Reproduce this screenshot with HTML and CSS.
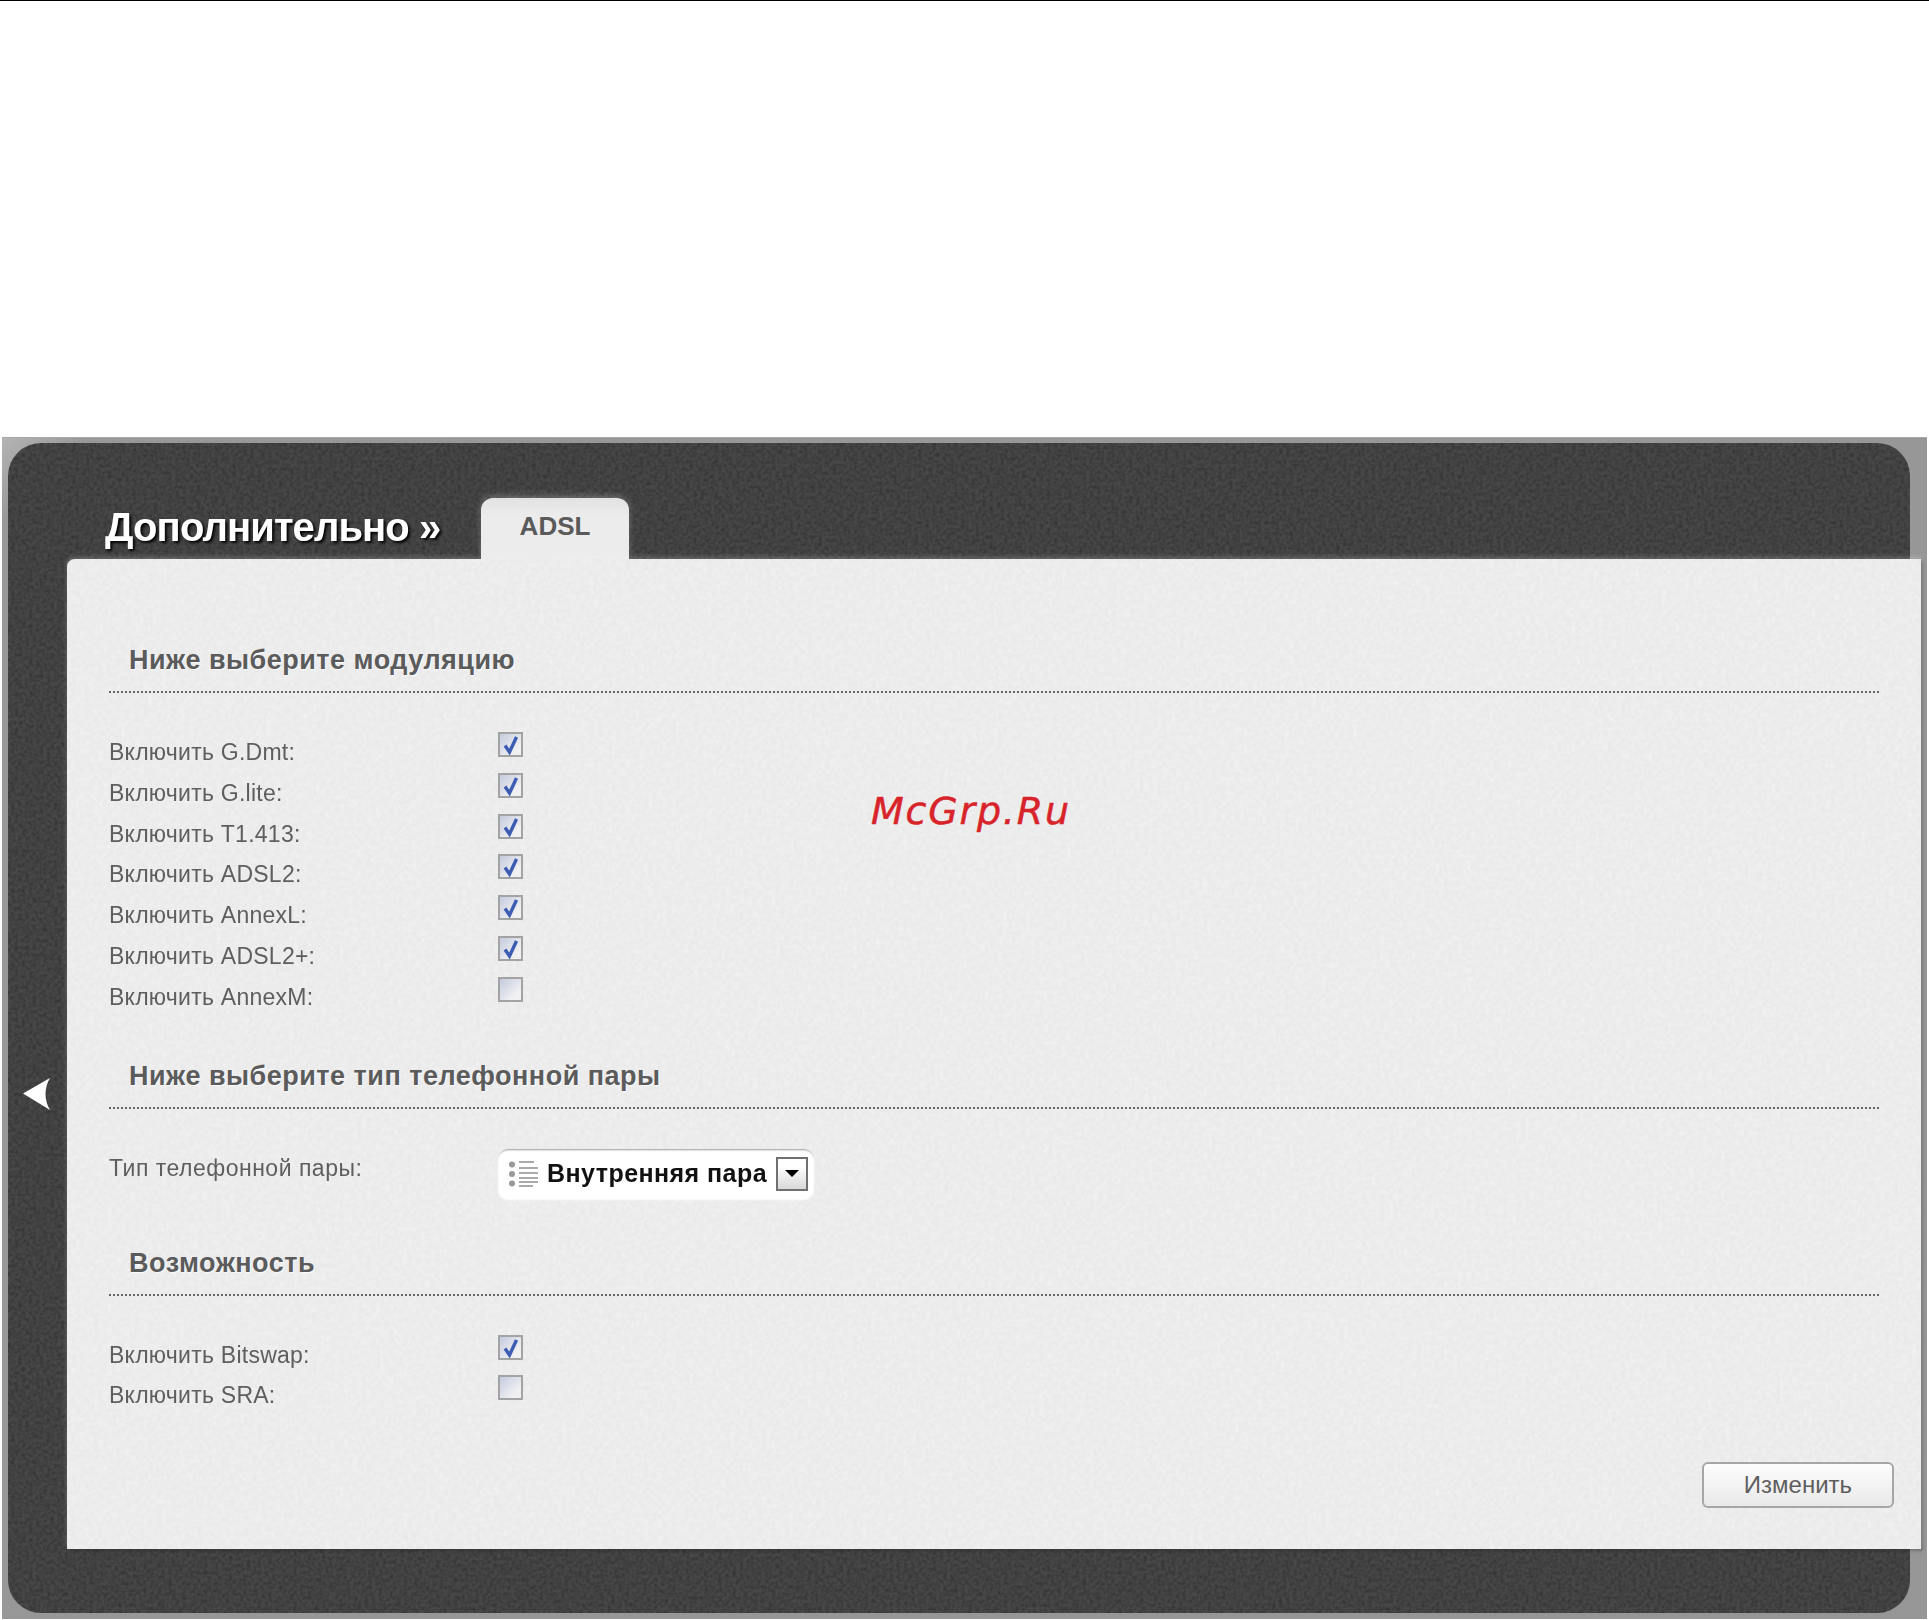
FILE: index.html
```html
<!DOCTYPE html>
<html lang="ru">
<head>
<meta charset="utf-8">
<title>ADSL</title>
<link rel="stylesheet" href="styles.css">
</head>
<body>
<svg class="defs" width="0" height="0" aria-hidden="true">
  <defs>
    <filter id="grain-dark" x="0" y="0" width="100%" height="100%">
      <feTurbulence type="fractalNoise" baseFrequency="0.28" numOctaves="2" seed="4"/>
      <feColorMatrix values="0 0 0 0 0  0 0 0 0 0  0 0 0 0 0  0.5 0 0 0 -0.17"/>
    </filter>
    <filter id="grain-light" x="0" y="0" width="100%" height="100%">
      <feTurbulence type="fractalNoise" baseFrequency="0.22" numOctaves="2" seed="9"/>
      <feColorMatrix values="0 0 0 0 1  0 0 0 0 1  0 0 0 0 1  0.6 0 0 0 -0.2"/>
    </filter>
    <symbol id="check" viewBox="0 0 24 25">
      <path d="M7 13.500l4.500 6.500L18.500 5" fill="none" stroke="#3c5cb4" stroke-width="3.400"/>
    </symbol>
  </defs>
</svg>
<div class="topline"></div>
<div class="frame">
  <div class="dark">
    <svg class="grain" aria-hidden="true"><rect width="100%" height="100%" filter="url(#grain-dark)"/></svg>
    <svg class="back" viewBox="0 0 28 32" aria-hidden="true"><path d="M0 15.500L27 0C21 10 21 22 27 32z" fill="#fff"/></svg>
    <div class="head">
      <h1 class="title">Дополнительно »</h1>
      <div class="tab">ADSL</div>
    </div>
    <main class="panel">
      <svg class="grain" aria-hidden="true"><rect width="100%" height="100%" filter="url(#grain-light)"/></svg>
      <h2 class="section">Ниже выберите модуляцию</h2>
      <div class="rows">
        <div class="row"><span class="label">Включить G.Dmt:</span><span class="box"><svg class="tick"><use href="#check"/></svg></span></div>
        <div class="row"><span class="label">Включить G.lite:</span><span class="box"><svg class="tick"><use href="#check"/></svg></span></div>
        <div class="row"><span class="label">Включить T1.413:</span><span class="box"><svg class="tick"><use href="#check"/></svg></span></div>
        <div class="row"><span class="label">Включить ADSL2:</span><span class="box"><svg class="tick"><use href="#check"/></svg></span></div>
        <div class="row"><span class="label">Включить AnnexL:</span><span class="box"><svg class="tick"><use href="#check"/></svg></span></div>
        <div class="row"><span class="label">Включить ADSL2+:</span><span class="box"><svg class="tick"><use href="#check"/></svg></span></div>
        <div class="row"><span class="label">Включить AnnexM:</span><span class="box"></span></div>
      </div>
      <h2 class="section">Ниже выберите тип телефонной пары</h2>
      <div class="row-select">
        <span class="label label-wide">Тип телефонной пары:</span>
        <div class="select">
          <svg class="list" viewBox="0 0 29 26" aria-hidden="true">
            <g fill="#999"><circle cx="3" cy="3.500" r="3"/><circle cx="3" cy="13" r="3"/><circle cx="3" cy="22.500" r="3"/></g>
            <g stroke="#aaa" stroke-width="2"><path d="M10 1h15M10 7h19M10 12h19M10 17h19M10 21h19M10 25h14"/></g>
          </svg>
          <span class="select-text">Внутренняя пара</span>
          <span class="drop"><span class="caret"></span></span>
        </div>
      </div>
      <h2 class="section">Возможность</h2>
      <div class="rows">
        <div class="row"><span class="label">Включить Bitswap:</span><span class="box"><svg class="tick"><use href="#check"/></svg></span></div>
        <div class="row"><span class="label">Включить SRA:</span><span class="box"></span></div>
      </div>
      <div class="actions"><button class="btn" type="button">Изменить</button></div>
      <div class="mark">McGrp.Ru</div>
    </main>
  </div>
</div>
</body>
</html>
```

FILE: styles.css
```css
* { box-sizing: border-box; }
html, body { margin: 0; padding: 0; background: #fff; }
body { width: 1929px; height: 1620px; overflow: hidden; font-family: "Liberation Sans", Arial, sans-serif; }
.defs { position: absolute; }

.topline { height: 1px; background: #000; margin-bottom: 436px; }

.frame {
  width: 1925px;
  height: 1182px;
  margin-left: 2px;
  padding: 5px 17px 7px 6px;
  background: linear-gradient(135deg, #b4b4b4 0, #989898 60px, #969696 100%);
  border-top: 1px solid #a8a8a8;
}

.dark {
  position: relative;
  height: 1170px;
  padding: 0 0 0 59px;
  background: #474747;
  border-radius: 33px;
}
.grain { position: absolute; inset: 0; width: 100%; height: 100%; pointer-events: none; }
.dark > .grain { border-radius: 33px; }

.back { position: absolute; left: 15px; top: 635px; width: 28px; height: 32px; z-index: 2; }

.head { position: relative; height: 116px; display: flex; align-items: flex-end; }
.title {
  margin: 0 40px 7px 38px;
  width: 336px;
  font-size: 40px;
  line-height: 50px;
  font-weight: 700;
  letter-spacing: -.9px;
  color: #fff;
  white-space: nowrap;
  text-shadow: 2px 2px 3px #000;
  filter: blur(.4px);
}
.tab {
  width: 148px;
  height: 61px;
  padding-top: 13px;
  text-align: center;
  font-size: 26px;
  line-height: 30px;
  font-weight: 700;
  color: #5a5a5a;
  background: linear-gradient(#e2e2e2, #ececec 30%);
  border-radius: 12px 12px 0 0;
  box-shadow: 0 -2px 6px rgba(255,255,255,.25);
}

.panel {
  position: relative;
  width: 1854px;
  height: 990px;
  padding: 81px 42px 0;
  background: #eaeaea;
  border-radius: 8px 0 0 0;
  box-shadow: 0 -2px 5px rgba(255,255,255,.22), 2px 2px 3px rgba(0,0,0,.25);
}
.panel > *:not(.grain) { position: relative; }

.section {
  margin: 0;
  height: 53px;
  padding: 0 0 11px 20px;
  font-size: 27px;
  line-height: 40px;
  font-weight: 700;
  color: #5b5b5b;
  letter-spacing: .5px;
  border-bottom: 2px dotted #666;
  text-shadow: 1px 1px 1px rgba(255,255,255,.8);
}

.rows { margin: 39px 0 38px; }
.row { display: flex; height: 40.800px; align-items: flex-start; }
.label { width: 389px; flex: none; font-size: 23px; line-height: 40px; letter-spacing: .25px; color: #5e5e5e; filter: blur(.3px); }
.label-wide { letter-spacing: .5px; margin-top: -1px; }
.box {
  position: relative;
  display: block;
  width: 25px;
  height: 25px;
  border: 2px solid #a3a3a3;
  background: linear-gradient(135deg, #c4cbdf, #f0f0f2 75%);
}
.tick { position: absolute; left: -2px; top: -2px; width: 24px; height: 25px; }

.row-select { display: flex; height: 68px; margin: 40px 0 26px; align-items: flex-start; }
.select {
  display: flex;
  align-items: center;
  width: 316px;
  height: 50px;
  padding: 0 6px 0 11px;
  background: #fff;
  border-radius: 10px;
  box-shadow: inset 0 2px 2px -1px #999, 0 1px 2px rgba(255,255,255,.9);
}
.list { width: 29px; height: 26px; flex: none; margin-right: 9px; }
.select-text { font-size: 25px; font-weight: 700; color: #111; letter-spacing: .45px; white-space: nowrap; filter: blur(.3px); }
.drop {
  display: flex;
  align-items: center;
  justify-content: center;
  width: 32px;
  height: 34px;
  margin-left: auto;
  border: 2px solid #707070;
  background: linear-gradient(#fff 25%, #d8d8d8);
}
.caret { width: 0; height: 0; border: 7px solid transparent; border-top: 7px solid #000; border-bottom: 0; }

.actions { display: flex; justify-content: flex-end; margin: -38px -15px 0 0; padding-top: 46px; }
.btn {
  width: 192px;
  height: 46px;
  padding: 0;
  font: 24px "Liberation Sans", Arial, sans-serif;
  color: #5e5e5e;
  background: linear-gradient(#fdfdfd, #e9e9e9);
  border: 2px solid #a6a6a6;
  border-radius: 6px;
}

.panel > .mark {
  position: absolute;
  left: 804px;
  top: 227px;
  font: italic 38px/50px "DejaVu Sans", sans-serif;
  letter-spacing: 1.800px;
  color: #d8232a;
  -webkit-text-stroke: .5px #d8232a;
}
```
